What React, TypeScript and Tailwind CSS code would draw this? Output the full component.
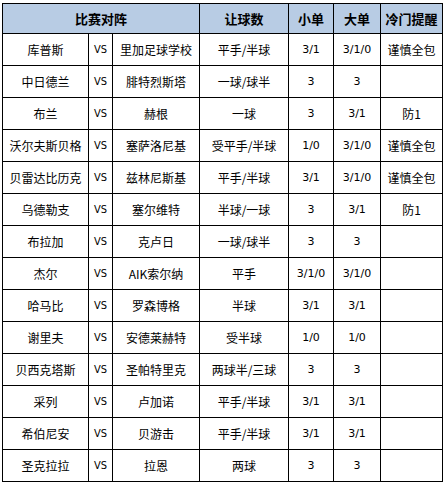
import React from 'react';

type Row = [string, string, string, string, string, string];

const rows: Row[] = [
    ['库普斯', '里加足球学校', '平手/半球', '3/1', '3/1/0', '谨慎全包'],
    ['中日德兰', '腓特烈斯塔', '一球/球半', '3', '3', ''],
    ['布兰', '赫根', '一球', '3', '3/1', '防1'],
    ['沃尔夫斯贝格', '塞萨洛尼基', '受平手/半球', '1/0', '3/1/0', '谨慎全包'],
    ['贝雷达比历克', '兹林尼斯基', '平手/半球', '3/1', '3/1/0', '谨慎全包'],
    ['乌德勒支', '塞尔维特', '半球/一球', '3', '3/1', '防1'],
    ['布拉加', '克卢日', '一球/球半', '3', '3', ''],
    ['杰尔', 'AIK索尔纳', '平手', '3/1/0', '3/1/0', ''],
    ['哈马比', '罗森博格', '半球', '3/1', '3/1', ''],
    ['谢里夫', '安德莱赫特', '受半球', '1/0', '1/0', ''],
    ['贝西克塔斯', '圣帕特里克', '两球半/三球', '3', '3', ''],
    ['采列', '卢加诺', '平手/半球', '3/1', '3/1', ''],
    ['希伯尼安', '贝游击', '平手/半球', '3/1', '3/1', ''],
    ['圣克拉拉', '拉恩', '两球', '3', '3', ''],
];

const cell = "border-[1.5px] border-black text-center align-middle p-0";
const num = "font-['DejaVu_Sans'] text-[11px]";

export default function App() {
    return (
        <div className="bg-white w-[444px] h-[487px] pl-[2px] pt-[3px]" style={{ fontFamily: '"Noto Sans CJK SC", "Liberation Sans", sans-serif' }}>
            <table className="table-fixed border-collapse w-[440px] text-[12px] text-black leading-none">
                <colgroup>
                    <col className="w-[86px]" />
                    <col className="w-[24px]" />
                    <col className="w-[87px]" />
                    <col className="w-[89px]" />
                    <col className="w-[45px]" />
                    <col className="w-[47px]" />
                    <col className="w-[62px]" />
                </colgroup>
                <thead>
                    <tr className="h-[30px] bg-[#b8cce4] font-bold text-[13px]">
                        <th colSpan={3} className={cell}>比赛对阵</th>
                        <th className={cell}>让球数</th>
                        <th className={cell}>小单</th>
                        <th className={cell}>大单</th>
                        <th className={cell}>冷门提醒</th>
                    </tr>
                </thead>
                <tbody>
                    {rows.map((r, i) => (
                        <tr key={i} className="h-[32px]">
                            <td className={cell}>{r[0]}</td>
                            <td className={`${cell} font-['DejaVu_Sans_Condensed'] text-[11px]`}>VS</td>
                            <td className={cell}>{r[1]}</td>
                            <td className={cell}>{r[2]}</td>
                            <td className={`${cell} ${num}`}>{r[3]}</td>
                            <td className={`${cell} ${num}`}>{r[4]}</td>
                            <td className={cell}>{r[5]}</td>
                        </tr>
                    ))}
                </tbody>
            </table>
        </div>
    );
}
